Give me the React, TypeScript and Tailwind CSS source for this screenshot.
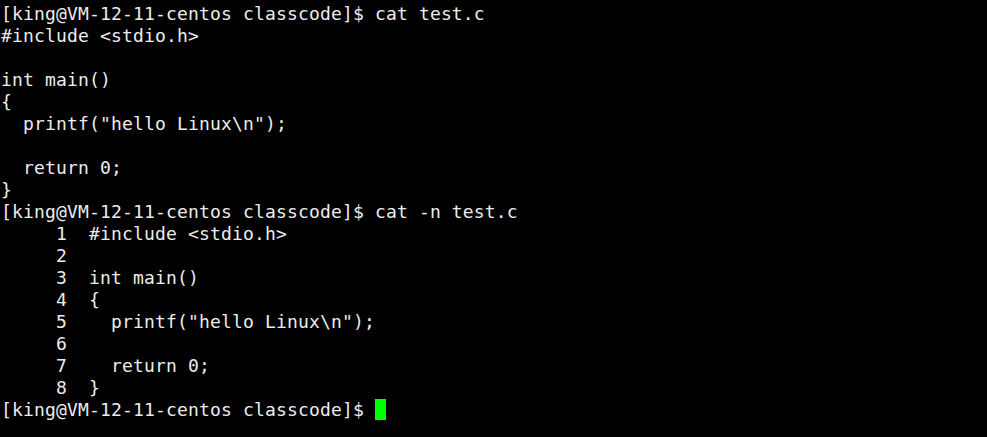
const prompt = "[king@VM-12-11-centos classcode]$ ";

const lines: string[] = [
  prompt + "cat test.c",
  "#include <stdio.h>",
  "",
  "int main()",
  "{",
  '  printf("hello Linux\\n");',
  "",
  "  return 0;",
  "}",
  prompt + "cat -n test.c",
  "     1  #include <stdio.h>",
  "     2",
  "     3  int main()",
  "     4  {",
  '     5    printf("hello Linux\\n");',
  "     6",
  "     7    return 0;",
  "     8  }",
];

export default function App() {
  return (
    <div className="w-[987px] h-[437px] overflow-hidden bg-black pt-[3px] pl-[1px] text-[#ececec] font-['DejaVu_Sans_Mono',monospace] text-[18px] tracking-[0.16px] leading-[22px]">
      {lines.map((l, i) => (
        <div key={i} className="h-[22px] whitespace-pre">
          {l}
        </div>
      ))}
      <div className="h-[22px] whitespace-pre flex items-start">
        <span>{prompt}</span>
        <span className="w-[11px] h-[21px] bg-[#00ff00]" />
      </div>
    </div>
  );
}
